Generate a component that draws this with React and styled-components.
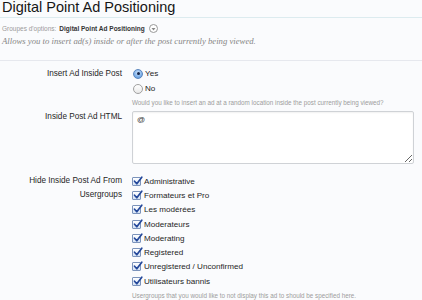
import React from "react";
import styled, { createGlobalStyle } from "styled-components";

const GlobalStyle = createGlobalStyle`
  html, body {
    margin: 0;
    padding: 0;
    background: #fafbfd;
  }
  body {
    font-family: "Liberation Sans", Arial, sans-serif;
    color: #333;
  }
`;

const Page = styled.div`
  width: 422px;
  height: 300px;
  overflow: hidden;
  padding-left: 2px;
  box-sizing: border-box;
`;

const TitleBar = styled.h1`
  margin: 0;
  height: 17px;
  border-bottom: 1px solid #dcebef;
  margin-left: -2px;
  padding-left: 2px;
  font-family: "Liberation Sans", Arial, sans-serif;
  font-weight: normal;
  font-size: 14.5px;
  line-height: 15px;
  color: #161616;
  white-space: nowrap;
`;

const Crumbs = styled.div`
  display: flex;
  align-items: center;
  gap: 2px;
  margin-top: 6px;
  font-size: 6.5px;
  line-height: 8px;
  color: #9a9a9a;

  b {
    color: #333;
    font-weight: bold;
    margin-left: 1px;
  }
`;

const MenuToggle = styled.span`
  display: inline-flex;
  align-items: center;
  justify-content: center;
  width: 7px;
  height: 7px;
  border: 1px solid #999;
  border-radius: 50%;
  margin-left: 2px;
  background: #fff;
`;

const Description = styled.p`
  margin: 3px 0 0;
  padding-bottom: 13px;
  margin-left: -2px;
  padding-left: 2px;
  border-bottom: 1px solid #e6e8ee;
  font-family: "Liberation Serif", Georgia, serif;
  font-style: italic;
  font-size: 8.7px;
  line-height: 11px;
  color: #868686;
  white-space: nowrap;
`;

const Form = styled.div`
  padding-top: 5px;
`;

const Row = styled.div`
  display: grid;
  grid-template-columns: 120px 1fr;
  column-gap: 10px;
  margin-bottom: ${({ gap }) => gap || 0}px;
`;

const Label = styled.div`
  text-align: right;
  font-size: 8.2px;
  line-height: ${({ lh }) => lh || 15}px;
  color: #262626;
`;

const Options = styled.div`
  display: flex;
  flex-direction: column;
`;

const Option = styled.label`
  display: flex;
  align-items: center;
  gap: 2px;
  height: ${({ h }) => h || 15}px;
  font-size: 8.1px;
  color: #1e1e1e;
  white-space: nowrap;
`;

const Radio = styled.span`
  position: relative;
  width: 8px;
  height: 8px;
  border-radius: 50%;
  margin-left: 1px;
  border: 1px solid ${({ checked }) => (checked ? "#5a86bd" : "#a0a0a0")};
  background: ${({ checked }) =>
    checked
      ? "radial-gradient(circle at 50% 35%, #cfe3fa 0%, #7fb0e8 60%, #4f8ad0 100%)"
      : "linear-gradient(#ffffff, #e9e9e9)"};

  &::after {
    content: "";
    display: ${({ checked }) => (checked ? "block" : "none")};
    position: absolute;
    left: 2.5px;
    top: 2.5px;
    width: 3px;
    height: 3px;
    border-radius: 50%;
    background: #14264a;
  }
`;

const Box = styled.span`
  position: relative;
  width: 7px;
  height: 7px;
  margin-right: 1px;
  border: 1px solid #7b93bb;
  border-radius: 1px;
  background: linear-gradient(#ffffff, #d5e3f5);

  svg {
    position: absolute;
    left: 0;
    top: -2px;
  }
`;

const Hint = styled.div`
  font-size: 6.3px;
  line-height: 10px;
  color: #9c9c9c;
  margin-top: ${({ mt }) => mt || 0}px;
  white-space: nowrap;
`;

const TextArea = styled.textarea`
  box-sizing: border-box;
  width: 282px;
  height: 53px;
  margin: 0;
  padding: 3px 4px;
  border: 1px solid #cfd2d6;
  border-radius: 2px;
  background: #fff;
  box-shadow: inset 0 1px 2px rgba(0, 0, 0, 0.06);
  font-family: "Liberation Sans", Arial, sans-serif;
  font-size: 8px;
  color: #333;
  outline: none;
`;

const Check = () => (
  <svg width="10" height="10" viewBox="0 0 10 10">
    <path d="M1.5 5.2 L3.8 7.8 L8.8 1.2" fill="none" stroke="#23479a" strokeWidth="1.7" strokeLinecap="round" strokeLinejoin="round" />
  </svg>
);

const groups = [
  "Administrative",
  "Formateurs et Pro",
  "Les modérées",
  "Moderateurs",
  "Moderating",
  "Registered",
  "Unregistered / Unconfirmed",
  "Utilisateurs bannis",
];

export default function App() {
  return (
    <Page>
      <GlobalStyle />
      <TitleBar>Digital Point Ad Positioning</TitleBar>
      <Crumbs>
        Groupes d'options: <b>Digital Point Ad Positioning</b>
        <MenuToggle>
          <svg width="5" height="4" viewBox="0 0 5 4">
            <path d="M0.5 1 L4.5 1 L2.5 3.5 Z" fill="#888" />
          </svg>
        </MenuToggle>
      </Crumbs>
      <Description>Allows you to insert ad(s) inside or after the post currently being viewed.</Description>

      <Form>
        <Row gap={3}>
          <Label>Insert Ad Inside Post</Label>
          <Options>
            <Option>
              <Radio checked />
              Yes
            </Option>
            <Option>
              <Radio />
              No
            </Option>
            <Hint mt={2}>Would you like to insert an ad at a random location inside the post currently being viewed?</Hint>
          </Options>
        </Row>

        <Row gap={10}>
          <Label lh={12}>Inside Post Ad HTML</Label>
          <TextArea defaultValue="@" />
        </Row>

        <Row>
          <Label lh={14}>
            Hide Inside Post Ad From
            <br />
            Usergroups
          </Label>
          <Options>
            {groups.map((g) => (
              <Option key={g} h={14.3}>
                <Box>
                  <Check />
                </Box>
                {g}
              </Option>
            ))}
            <Hint mt={3}>Usergroups that you would like to not display this ad to should be specified here.</Hint>
          </Options>
        </Row>
      </Form>
    </Page>
  );
}
